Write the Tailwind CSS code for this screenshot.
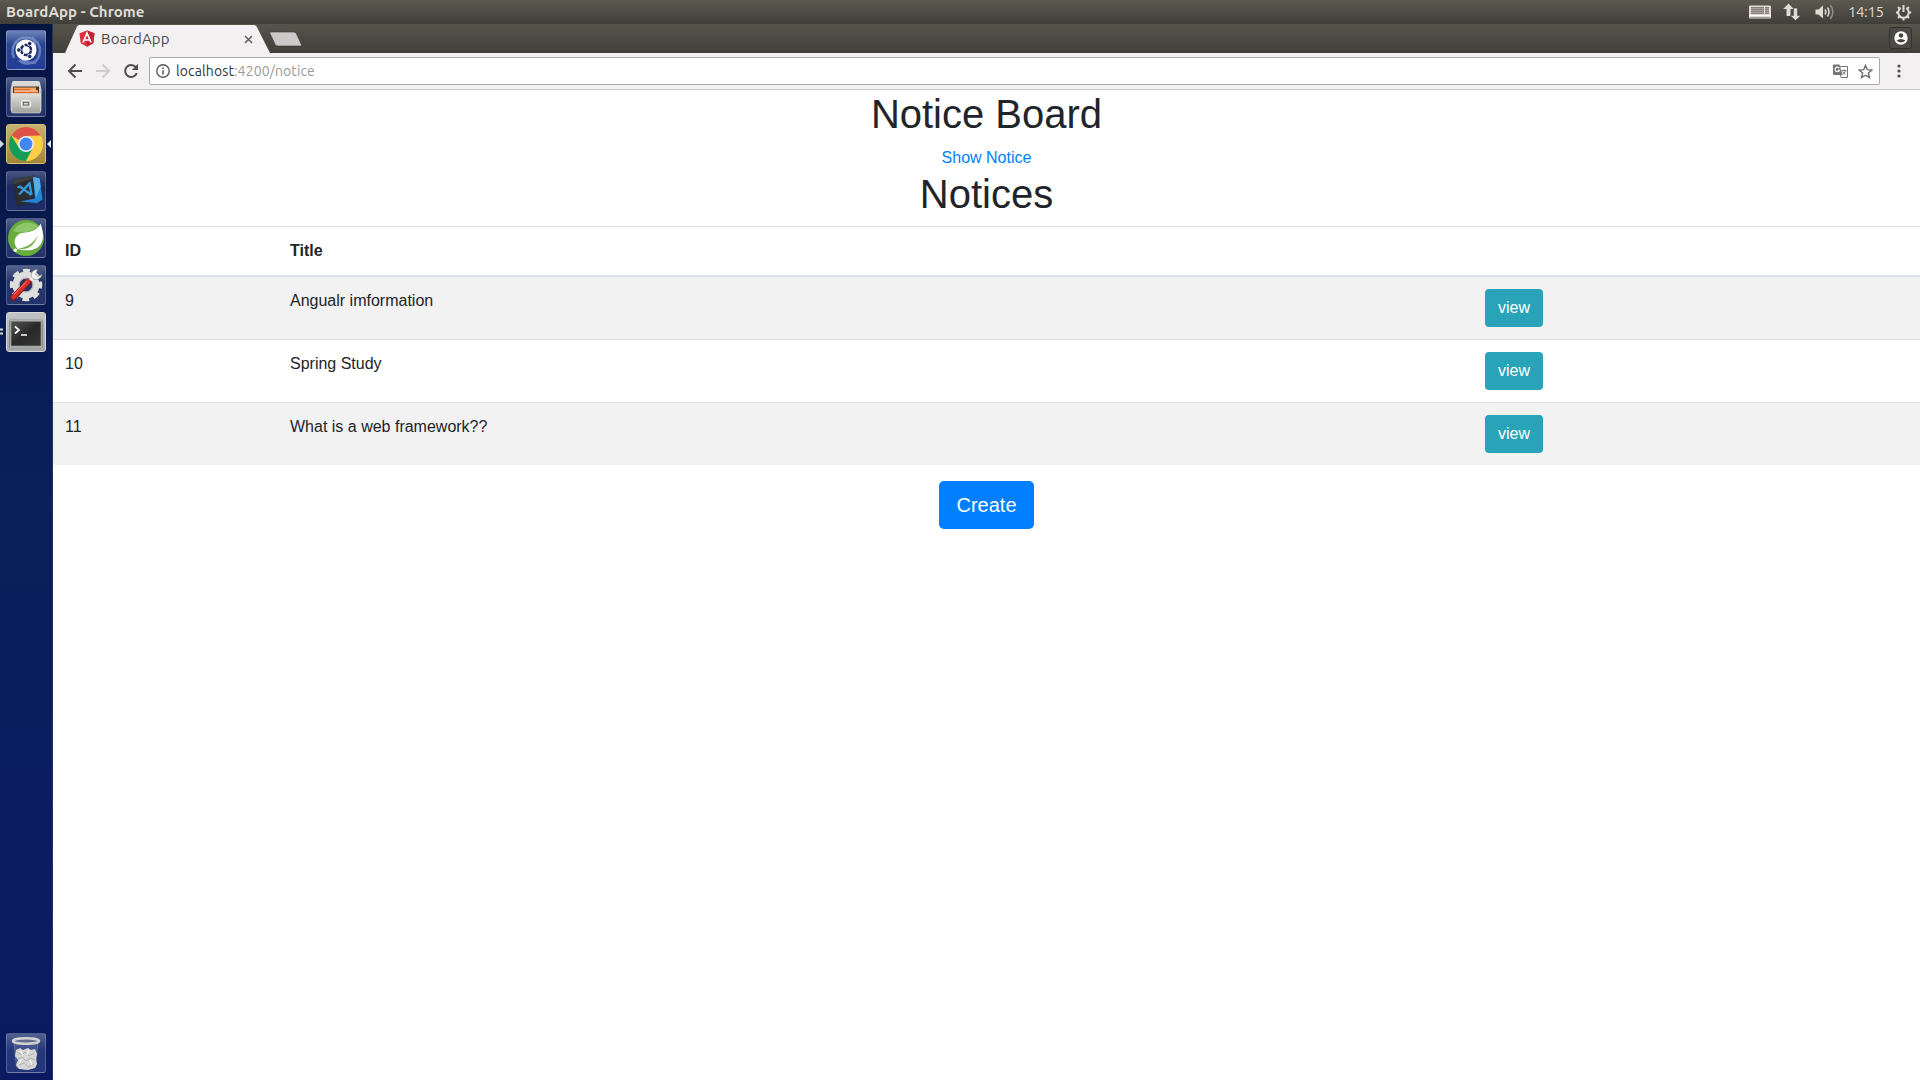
<!DOCTYPE html>
<html lang="en">
<head>
<meta charset="utf-8">
<title>BoardApp</title>
<script src="https://cdn.jsdelivr.net/npm/@tailwindcss/browser@4"></script>
</head>
<body class="flex h-screen flex-col overflow-hidden bg-white font-['Liberation_Sans',sans-serif] text-[#212529]">

<!-- System panel -->
<header class="flex h-6 shrink-0 items-center justify-between bg-linear-to-b from-[#5c594f] to-[#403e39] pl-1.5 font-['Ubuntu','Noto_Sans',sans-serif] text-[#dfdbd2]">
  <div class="text-[15px] font-bold leading-6 tracking-[0.05px]">BoardApp - Chrome</div>
  <div class="flex h-6 items-center pr-2">
    <svg class="mr-[12px] h-[14px] w-[22px]" viewBox="0 0 22 14"><rect y="0.5" width="22" height="13" rx="1" fill="#dfdbd2"/><path d="M2 2h18v7H2z" fill="#85827c"/><path d="M2.500 3.500h17M2.500 5.500h17M2.500 7.500h17" stroke="#c9c5bd" stroke-dasharray="1 1"/><path d="M15.500 2v7" stroke="#dfdbd2"/><path d="M0 10.500h22" stroke="#fff"/><path d="M1 12.500h20" stroke="#a09d96"/></svg>
    <svg class="mr-[14px] h-[18px] w-[18px]" viewBox="0 0 18 18" fill="#dfdbd2"><path d="M5.500 0.500 10.800 6H7.500v7h-4V6H0.200z"/><path d="M12.500 17.500 7.200 12.500h3.300V5h4v7.500h3.300z" stroke="#4a4842" stroke-width=".6"/></svg>
    <svg class="mr-[13px] h-[16px] w-[20px]" viewBox="0 0 20 16" fill="none"><path d="M0.500 5.500h3L8 1.500v13l-4.500-4h-3z" fill="#dfdbd2"/><path d="M10 5.500q1.800 2.500 0 5M12.500 3.500q3.200 4.500 0 9" stroke="#dfdbd2" stroke-width="1.500"/><path d="M15.300 1q5 7 0 14" stroke="#908d86" stroke-width="1.500"/></svg>
    <div class="mr-[12px] w-[35px] whitespace-nowrap text-[15px] leading-6 tracking-[-0.4px]">14:15</div>
    <svg class="h-[17px] w-[17px]" viewBox="0 0 17 17" fill="none" stroke="#dfdbd2"><path d="M5.800 4A5.300 5.300 0 1 0 11.200 4" stroke-width="2"/><path d="M8.500 1v7" stroke-width="2"/><path d="M8.500 14v2.500M1 8.500h2M14 8.500h2.200M3 3l1.500 1.500M14 3l-1.500 1.500M3 14l1.500-1.500M14 14l-1.500-1.500" stroke-width="2"/></svg>
  </div>
</header>

<div class="flex min-h-0 flex-1">
  <!-- Launcher -->
  <nav class="relative flex w-[53px] shrink-0 flex-col gap-[7px] border-r border-[#26325c] bg-linear-to-b from-[#061440] via-[#0a1f5c] via-45% to-[#0b1a60] pt-1.5 pl-1.5">
    <div class="h-10 w-10 rounded-[3px] border border-white/25 bg-linear-to-b from-[#6d83b9] via-[#2c4592] via-35% to-[#213d97]">
      <svg class="h-[38px] w-[38px]" viewBox="1 1 38 38" fill="none"><path d="M8 28C3 16 12 5 24 8c8 2 12 10 9 18C31 34 18 36 13 30M9 12c4 2 4 8 2 11M30 32c-5 2-10 0-14-2M26 7c4 5 3 9 3 12" stroke="#8fa3d7" stroke-opacity=".6" stroke-width="2.500"/><circle cx="20" cy="20" r="10.500" fill="#fff"/><circle cx="20" cy="20" r="5" stroke="#1c2b66" stroke-width="2.600" stroke-dasharray="9.200 1.270" transform="rotate(7 20 20)"/><g fill="#1c2b66" stroke="#fff" stroke-width=".8"><circle cx="12.800" cy="20" r="2.200"/><circle cx="23.700" cy="13.600" r="2.200"/><circle cx="23.700" cy="26.400" r="2.200"/></g></svg>
    </div>
    <div class="h-10 w-10 rounded-[3px] border border-white/20 bg-linear-to-b from-[#52618c] via-[#253567] via-40% to-[#25336b]">
      <svg class="h-[38px] w-[38px]" viewBox="1 1 38 38"><defs><linearGradient id="cab" x2="0" y2="1"><stop stop-color="#dededb"/><stop offset="1" stop-color="#a0a19e"/></linearGradient></defs><path d="M6 5.500Q6 4 8 4h24q2 0 2 1.500L35.500 13v20q0 2-2 2h-27q-2 0-2-2V13z" fill="url(#cab)"/><path d="M7 9.500h26v8H7z" fill="#4c3930"/><path d="M8 10.500h22v5H8z" fill="#f4a35c"/><path d="M8 12h16l2 1.500h6v4H8z" fill="#e0692a"/><path d="M8 14h24" stroke="#fff1dc"/><path d="M5.500 16.500h29v18q0 1.500-1.500 1.500H7q-1.500 0-1.500-1.500z" fill="url(#cab)" stroke="#e6e6e4" stroke-width=".5"/><rect x="15.500" y="23.500" width="9" height="6.500" rx="1" fill="#c0c0bd" stroke="#f4f4f4"/><rect x="17.500" y="25.500" width="5" height="2.500" fill="#ddd" stroke="#686868"/></svg>
    </div>
    <div class="relative h-10 w-10 rounded-[3px] border border-[#d4c27c] bg-linear-to-b from-[#c5b272] to-[#a18736]">
      <svg class="h-[38px] w-[38px]" viewBox="1 1 38 38"><circle cx="20" cy="20" r="17" fill="#ffcd46"/><path d="M20 20 5.300 11.500A17 17 0 0 1 34.700 11.500L20 12z" fill="#dd5347"/><path d="M5.300 11.500A17 17 0 0 0 20 37L27 24 20 28 13 24z" fill="#129d59"/><path d="M20 12h14.700A17 17 0 0 1 20 37l7-13z" fill="#ffcd46"/><circle cx="20" cy="20" r="8" fill="#e8eef6"/><circle cx="20" cy="20" r="6.400" fill="#4286f3"/></svg>
      <span class="absolute top-[15px] -left-[7px] border-y-[4.500px] border-l-[4.500px] border-y-transparent border-l-[#d3d6df]"></span>
      <span class="absolute top-[15px] -right-[6px] border-y-[4.500px] border-r-[4.500px] border-y-transparent border-r-[#e7e8ed]"></span>
    </div>
    <div class="h-10 w-10 rounded-[3px] border border-white/20 bg-linear-to-b from-[#45547f] via-[#1c2b60] via-40% to-[#1e2d66]">
      <svg class="h-[38px] w-[38px]" viewBox="1 1 38 38"><path d="m6.500 8.500 21-4 1.500 26-18 5z" fill="#2b2c2f"/><path d="m6.500 8.500 21-4 .2 3L8 13z" fill="#3d3e41"/><path d="m27 6 6.500 1.500 3 21-5.500 3.500-17-1.500 15-3z" fill="#2487d3"/><path d="m27 6 6.500 1.500 1.200 8L30 27z" fill="#52aee9"/><path d="m11.500 16.500 2.500-1 11.500 8.500M13 23.500l10.500-11L25.500 24" fill="none" stroke="#3498dc" stroke-width="2.300"/></svg>
    </div>
    <div class="h-10 w-10 rounded-[3px] border border-white/20 bg-linear-to-b from-[#52618c] via-[#253567] via-40% to-[#25336b]">
      <svg class="h-[38px] w-[38px]" viewBox="1 1 38 38"><circle cx="20" cy="20" r="18" fill="#68ad3c"/><path d="M7 13A17 17 0 0 1 33 9Q20 17 7 13z" fill="#8fc66c"/><path d="M34.500 5.500c4 11 3.500 19-3 24-6 4-13 3-20 1.500-4-5-4-11 1-14.500 6-4 17 0 22-11z" fill="#fff"/><path d="M12 30.500c9-1 16-5 20-13.500-3.500 11.500-11.500 15.500-20 13.500z" fill="#68ad3c"/><circle cx="9.300" cy="32.300" r="1.700" fill="#fff"/></svg>
    </div>
    <div class="h-10 w-10 rounded-[3px] border border-white/20 bg-linear-to-b from-[#52618c] via-[#253567] via-40% to-[#25336b]">
      <svg class="h-[38px] w-[38px]" viewBox="1 1 38 38" fill="none"><circle cx="20" cy="20" r="10" stroke="#dededd" stroke-width="7"/><circle cx="20" cy="20" r="14.300" stroke="#dededd" stroke-width="4" stroke-dasharray="6.600 4.631" transform="rotate(-13 20 20)"/><circle cx="20" cy="20" r="7" stroke="#aaa"/><path d="m7.500 32.500 15-16" stroke="#8f1714" stroke-width="6" stroke-linecap="round"/><path d="m7.500 32 14.500-15.500" stroke="#d9302a" stroke-width="4.500" stroke-linecap="round"/><path d="m8 29.500 13-13.500" stroke="#f2776d"/><path d="m24 15 4-4" stroke="#eee" stroke-width="3.500"/><path d="M31.500 4.500c-5 0-7.500 4.500-5.500 8s9 2.500 10-3l-4 2-2.500-2z" fill="#f4f4f2" stroke="#8a8a8a" stroke-width=".6"/></svg>
    </div>
    <div class="relative h-10 w-10 rounded-[3px] border border-[#d6d7d9] bg-linear-to-b from-[#c2c3c5] to-[#a5a6aa]">
      <svg class="h-[38px] w-[38px]" viewBox="1 1 38 38" fill="none"><defs><linearGradient id="term" x2="1" y2="1"><stop stop-color="#555"/><stop offset=".5" stop-color="#292929"/><stop offset="1" stop-color="#353535"/></linearGradient></defs><rect x="3.500" y="8" width="33" height="28" rx="1" fill="#cfd0ce" stroke="#8b8d8a"/><rect x="5" y="9.500" width="30" height="24.500" fill="url(#term)" stroke="#777876"/><path d="m9 14.500 4 3.500-4 3.500M15 23h6" stroke="#fff" stroke-width="1.700"/></svg>
      <svg class="absolute top-[15px] -left-[7px] h-[8px] w-[4px]" viewBox="0 0 4 8"><path d="M0 1.500h3M0 5.500h3" stroke="#d3d6df" stroke-width="2"/></svg>
    </div>
    <div class="mt-auto mb-[7px] h-10 w-10 rounded-[3px] border border-white/20 bg-linear-to-b from-[#52618f] via-[#26387a] via-40% to-[#24367b]">
      <svg class="h-[38px] w-[38px]" viewBox="1 1 38 38"><path d="m8 9 2.500 25q9.500 4 19 0L32 9z" fill="#8794b2" fill-opacity=".25" stroke="#8f9cb8" stroke-opacity=".5"/><path d="m10 17 4-2 3 2 5-2 3 2 4-1 2 5-1 5 1 5-2 4-7 2-9-1-3-4 2-5-3-4z" fill="#d5d6d5"/><path d="m11 19 5 3 3-3 4 4 5-3M12 26l4-2 4 4 5-3 4 2M13 32l5-2 4 4 6-3" fill="none" stroke="#adaeae"/><path d="m14 18 3 4m6-5-2 5m-6 5-2 4m11-4 2 5" stroke="#f5f5f5" stroke-width="1.300"/><ellipse cx="20" cy="8" rx="13" ry="2.800" fill="#616d8e" stroke="#d2d3d0" stroke-width="2.500"/></svg>
    </div>
  </nav>

  <!-- Browser window -->
  <div class="flex min-w-0 flex-1 flex-col">
    <div class="flex h-[29px] shrink-0 justify-between bg-linear-to-b from-[#57544b] to-[#403f3a] pl-[12px] font-['Ubuntu','Noto_Sans',sans-serif]">
      <div class="flex">
        <div class="relative flex h-[29px] w-[205px] items-center pl-[14px]">
          <svg class="absolute inset-0 h-[29px] w-[205px]" viewBox="0 0 205 29"><path d="M0 29 12 2.500Q12.800 1 14.300 1h174.500q2 0 2.800 1.500L205 29z" fill="#f2f0f1"/></svg>
          <svg class="relative h-[17px] w-4" viewBox="0 0 16 17"><path d="m8 .5 7.500 2.700-1.200 10L8 16.700l-6.300-3.500-1.200-10z" fill="#dd2f3d"/><path d="m8 .5 7.500 2.700-1.200 10L8 16.700z" fill="#be2633"/><path d="M4 12.500 8 3.200l4 9.300M5.500 10h5" fill="none" stroke="#fff" stroke-width="1.700"/></svg>
          <span class="relative ml-[6px] flex-1 pt-px text-[15px] leading-[28px] tracking-[0.1px] text-[#4b4b4b]">BoardApp</span>
          <svg class="relative mt-px mr-[17px] h-[9px] w-[9px]" viewBox="0 0 9 9"><path d="m1 1 7 7m0-7L1 8" stroke="#5e5c5c" stroke-width="1.500"/></svg>
        </div>
        <svg class="-ml-px mt-[7px] h-[17px] w-[34px]" viewBox="0 0 34 17"><path d="M2 1h22.500q2 0 2.800 1.500l5 11q.5 1.500-1 1.500H9q-2 0-2.800-1.500L1 2.500Q.5 1 2 1z" fill="#ccc9c9" stroke="#3b3935" stroke-width=".6"/></svg>
      </div>
      <div class="mt-[3px] mr-[8px] flex h-[22px] w-[23px] items-center justify-center rounded-[3px] border border-[#34332f] bg-[#4c4a44]">
        <svg class="h-[14px] w-[14px]" viewBox="0 0 14 14"><circle cx="7" cy="7" r="6.700" fill="#fff"/><circle cx="7" cy="4.500" r="2.200" fill="#454440"/><path d="M2.500 9.500Q7 6.500 11.500 9.500 7 13.500 2.500 9.500z" fill="#454440"/></svg>
      </div>
    </div>

    <div class="flex h-[37px] shrink-0 items-center border-b border-[#cbc9ca] bg-[#f2f0f1] pl-[14px] font-['Ubuntu','Noto_Sans',sans-serif]">
      <svg class="h-4 w-4" viewBox="0 0 16 16" fill="none" stroke="#4f4e4e" stroke-width="2"><path d="M15 8H2M8.500 1.500 2 8l6.500 6.500"/></svg>
      <svg class="ml-3 h-4 w-4" viewBox="0 0 16 16" fill="none" stroke="#cfcdce" stroke-width="2"><path d="M1 8h13M7.500 1.500 14 8l-6.500 6.500"/></svg>
      <svg class="ml-[12px] h-4 w-4" viewBox="0 0 16 16"><path d="M12.800 4.200A6 6 0 1 0 13.800 10" fill="none" stroke="#4f4e4e" stroke-width="2"/><path d="M15 .8V7H8.800z" fill="#4f4e4e"/></svg>
      <div class="ml-[10px] flex h-[28px] flex-1 items-center rounded-[2px] border border-[#aaa8a9] bg-white pl-[6px]">
        <svg class="h-[14px] w-[14px]" viewBox="0 0 14 14" fill="none" stroke="#5a5a5a" stroke-width="1.400"><circle cx="7" cy="7" r="6.200"/><path d="M7 6.200v4.300M7 3.400V5" stroke-width="1.600"/></svg>
        <div class="ml-[6px] flex-1 text-[14px] leading-[26px] tracking-[0.12px] text-[#999]"><span class="text-[#333]">localhost</span>:4200/notice</div>
        <svg class="h-[15px] w-[15px]" viewBox="0 0 15 15"><path d="M6 2.500h8.500v11H8z" fill="#fff" stroke="#777"/><path d="M1 .5h5.500l3 10.500H1q-1 0-1-1v-8.500q0-1 1-1z" fill="#757575"/><path d="M6.300 4.200A2.300 2.300 0 1 0 6.500 6.200H4.500" fill="none" stroke="#fff" stroke-width="1.100"/><path d="M8.500 6.500h5M11 5.500v1M12.500 6.500q-.8 3-3 4M9.500 7.500q1 2.200 3 3" fill="none" stroke="#777"/></svg>
        <svg class="mr-[6px] ml-[10px] h-[15px] w-[15px]" viewBox="0 0 15 15"><path d="m7.500 1.500 1.800 4.200 4.500.4-3.400 3 1 4.400-3.900-2.300-3.900 2.300 1-4.400-3.400-3 4.500-.4z" fill="none" stroke="#6b6b6b" stroke-width="1.400"/></svg>
      </div>
      <svg class="mr-[19px] ml-[17px] h-[14px] w-[4px]" viewBox="0 0 4 14" fill="#505050"><circle cx="2" cy="2" r="1.600"/><circle cx="2" cy="7" r="1.600"/><circle cx="2" cy="12" r="1.600"/></svg>
    </div>

    <main class="flex-1 bg-white text-center text-base leading-6">
      <h1 class="mb-2 text-[40px] leading-12">Notice Board</h1>
      <a class="block text-[#007fff]">Show Notice</a>
      <h1 class="mb-2 text-[40px] leading-12">Notices</h1>
      <div class="text-left">
        <div class="grid h-[51px] grid-cols-[225px_1195px_1fr] border-t border-b-2 border-t-[#dee2e6] border-b-[#dee2e6] font-bold *:p-3">
          <div>ID</div><div>Title</div><div></div>
        </div>
        <div class="grid grid-cols-[225px_1195px_1fr] bg-[#f2f2f2] *:p-3">
          <div>9</div><div>Angualr imformation</div>
          <div><button class="block h-[38px] w-[58px] rounded bg-[#28a3b7] text-white">view</button></div>
        </div>
        <div class="grid grid-cols-[225px_1195px_1fr] border-t border-[#dee2e6] *:p-3">
          <div>10</div><div>Spring Study</div>
          <div><button class="block h-[38px] w-[58px] rounded bg-[#28a3b7] text-white">view</button></div>
        </div>
        <div class="grid grid-cols-[225px_1195px_1fr] border-t border-[#dee2e6] bg-[#f2f2f2] *:p-3">
          <div>11</div><div>What is a web framework??</div>
          <div><button class="block h-[38px] w-[58px] rounded bg-[#28a3b7] text-white">view</button></div>
        </div>
      </div>
      <button class="mt-4 h-12 w-[95px] rounded-[5px] bg-[#007fff] text-xl text-white">Create</button>
    </main>
  </div>
</div>
</body>
</html>
